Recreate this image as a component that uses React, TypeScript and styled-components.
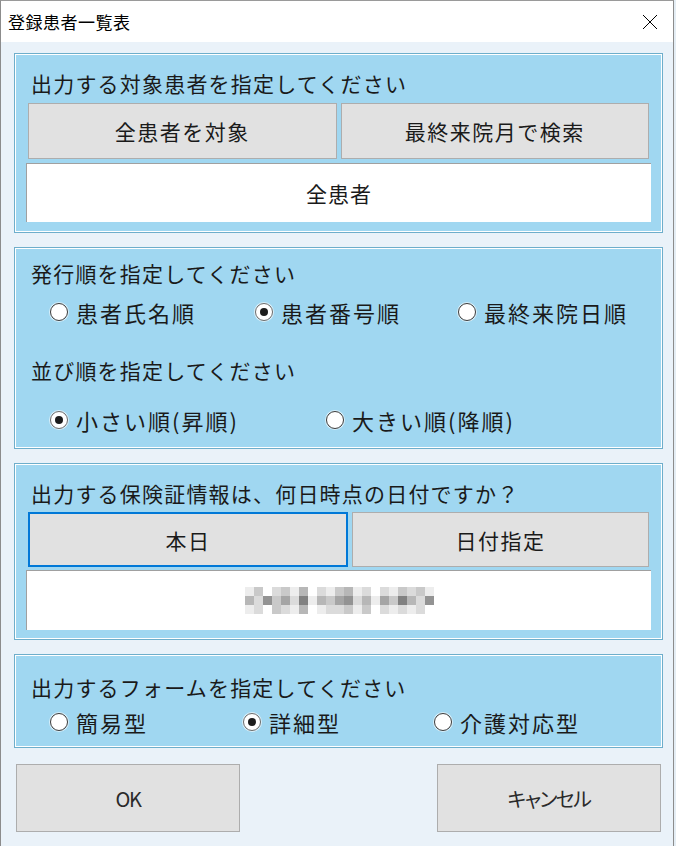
import React from 'react'
import styled, { createGlobalStyle } from 'styled-components'

const GlobalStyle = createGlobalStyle`
  html, body {
    margin: 0;
    padding: 0;
  }

  body {
    background: #e4edf4;
    font-family: "Noto Sans CJK JP", "Noto Sans", sans-serif;
    color: #1a1a1a;
  }
`

const Window = styled.div`
  width: 674px;
  height: 846px;
  box-sizing: border-box;
  border-left: 1px solid #8c8c8c;
  border-right: 1px solid #8c8c8c;
  border-top: 1px solid #9a9a9a;
  display: flex;
  flex-direction: column;
  background: #eaf2f9;
`

const TitleBar = styled.header`
  height: 41px;
  flex-shrink: 0;
  display: flex;
  align-items: center;
  justify-content: space-between;
  background: #ffffff;
  padding-left: 7px;
`

const Caption = styled.span`
  font-size: 17px;
  letter-spacing: 0.5px;
  color: #000;
`

const CloseButton = styled.div`
  width: 46px;
  height: 41px;
  display: flex;
  align-items: center;
  justify-content: center;
`

const Client = styled.main`
  flex: 1;
  display: flex;
  flex-direction: column;
  gap: 14px;
  padding: 11px 10px 0 13px;
`

const Panel = styled.section<{ $pad: number }>`
  border: 1px solid #6eaecb;
  box-shadow: inset 0 0 0 1px #ffffff;
  background: #a0d7f1;
  padding: 0 12px ${p => p.$pad}px;
  display: flex;
  flex-direction: column;
`

const Heading = styled.h2<{ $top: number }>`
  margin: ${p => p.$top}px 0 0;
  padding-left: 4px;
  height: 28px;
  line-height: 28px;
  font-size: 21px;
  font-weight: normal;
  letter-spacing: 1.2px;
  white-space: nowrap;
`

const ButtonRow = styled.div<{ $cols: string; $top: number; $height: number }>`
  display: grid;
  grid-template-columns: ${p => p.$cols};
  gap: 4px;
  margin: ${p => p.$top}px 1px 0;
  height: ${p => p.$height}px;
`

const Button = styled.button<{ $focused?: boolean }>`
  box-sizing: border-box;
  height: 100%;
  background: #e1e1e1;
  border: ${p => (p.$focused ? '2px solid #0078d7' : '1px solid #adadad')};
  font-family: inherit;
  font-size: 21px;
  letter-spacing: 1.5px;
  color: #1a1a1a;
  padding: 0;
`

const InfoBox = styled.div<{ $top: number; $height: number }>`
  margin: ${p => p.$top}px -1px 0;
  height: ${p => p.$height}px;
  box-sizing: border-box;
  background: #ffffff;
  border-top: 1px solid #a0a0a0;
  border-left: 1px solid #a0a0a0;
  display: flex;
  align-items: center;
  justify-content: center;
  font-size: 21px;
  letter-spacing: 1px;
`

const RadioRow = styled.div<{ $cols: string; $top: number }>`
  display: grid;
  grid-template-columns: ${p => p.$cols};
  align-items: center;
  height: 40px;
  margin-top: ${p => p.$top}px;
  padding-left: 23px;
`

const RadioOption = styled.label`
  display: flex;
  align-items: center;
  gap: 8px;
  font-size: 22px;
  letter-spacing: 2px;
  white-space: nowrap;
`

const RadioDot = styled.span<{ $checked?: boolean }>`
  position: relative;
  width: 18px;
  height: 18px;
  box-sizing: border-box;
  border-radius: 50%;
  border: 1px solid ${p => (p.$checked ? '#6a6a6a' : '#3a3a3a')};
  background: #ffffff;
  box-shadow: 0 0 0 1px rgba(255, 255, 255, 0.6);
  flex-shrink: 0;

  &::after {
    content: '';
    display: ${p => (p.$checked ? 'block' : 'none')};
    position: absolute;
    left: 4px;
    top: 4px;
    width: 8px;
    height: 8px;
    border-radius: 50%;
    background: #1c1c1c;
  }
`

const Footer = styled.footer`
  display: flex;
  justify-content: space-between;
  margin-top: 2px;
  padding: 0 2px;
`

const FooterButton = styled.button`
  width: 224px;
  height: 68px;
  background: #e1e1e1;
  border: 1px solid #adadad;
  font-family: inherit;
  font-size: 20px;
  font-feature-settings: "palt";
  letter-spacing: -1.5px;
  color: #2a2a2a;
  padding: 0;
`

const Radio = ({ label, checked }: { label: string; checked?: boolean }) => (
  <RadioOption>
    <RadioDot $checked={checked} />
    {label}
  </RadioOption>
)

// redacted date, drawn as the mosaic it is in the screenshot
const mosaic = [
  '130231402134120213231',
  '426352714356241537426',
  '120321401223130212120',
]

const Mosaic = () => (
  <svg width="189" height="27" viewBox="0 0 189 27">
    {mosaic.map((row, r) =>
      row.split('').map((v, c) => {
        const g = 255 - Number(v) * 18
        return (
          <rect
            key={`${r}_${c}`}
            x={c * 9}
            y={r * 9}
            width="9"
            height="9"
            fill={`rgb(${g},${g},${g})`}
          />
        )
      })
    )}
  </svg>
)

const App = (): React.ReactElement => {
  return (
    <>
      <GlobalStyle />
      <Window>
        <TitleBar>
          <Caption>登録患者一覧表</Caption>
          <CloseButton>
            <svg width="16" height="16" viewBox="0 0 16 16">
              <path d="M1 1 L15 15 M15 1 L1 15" stroke="#000" strokeWidth="1" fill="none" />
            </svg>
          </CloseButton>
        </TitleBar>
        <Client>
          <Panel $pad={10}>
            <Heading $top={15}>出力する対象患者を指定してください</Heading>
            <ButtonRow $cols="1fr 1fr" $top={6} $height={56}>
              <Button>全患者を対象</Button>
              <Button>最終来院月で検索</Button>
            </ButtonRow>
            <InfoBox $top={4} $height={59}>全患者</InfoBox>
          </Panel>

          <Panel $pad={8}>
            <Heading $top={11}>発行順を指定してください</Heading>
            <RadioRow $cols="205px 203px 1fr" $top={5}>
              <Radio label="患者氏名順" />
              <Radio label="患者番号順" checked />
              <Radio label="最終来院日順" />
            </RadioRow>
            <Heading $top={24}>並び順を指定してください</Heading>
            <RadioRow $cols="276px 1fr" $top={16}>
              <Radio label="小さい順(昇順)" checked />
              <Radio label="大きい順(降順)" />
            </RadioRow>
          </Panel>

          <Panel $pad={9}>
            <Heading $top={15}>出力する保険証情報は、何日時点の日付ですか？</Heading>
            <ButtonRow $cols="320px 1fr" $top={5} $height={55}>
              <Button $focused>本日</Button>
              <Button>日付指定</Button>
            </ButtonRow>
            <InfoBox $top={3} $height={60}>
              <Mosaic />
            </InfoBox>
          </Panel>

          <Panel $pad={5}>
            <Heading $top={18}>出力するフォームを指定してください</Heading>
            <RadioRow $cols="193px 191px 1fr" $top={1}>
              <Radio label="簡易型" />
              <Radio label="詳細型" checked />
              <Radio label="介護対応型" />
            </RadioRow>
          </Panel>

          <Footer>
            <FooterButton>OK</FooterButton>
            <FooterButton>キャンセル</FooterButton>
          </Footer>
        </Client>
      </Window>
    </>
  )
}

export default App
